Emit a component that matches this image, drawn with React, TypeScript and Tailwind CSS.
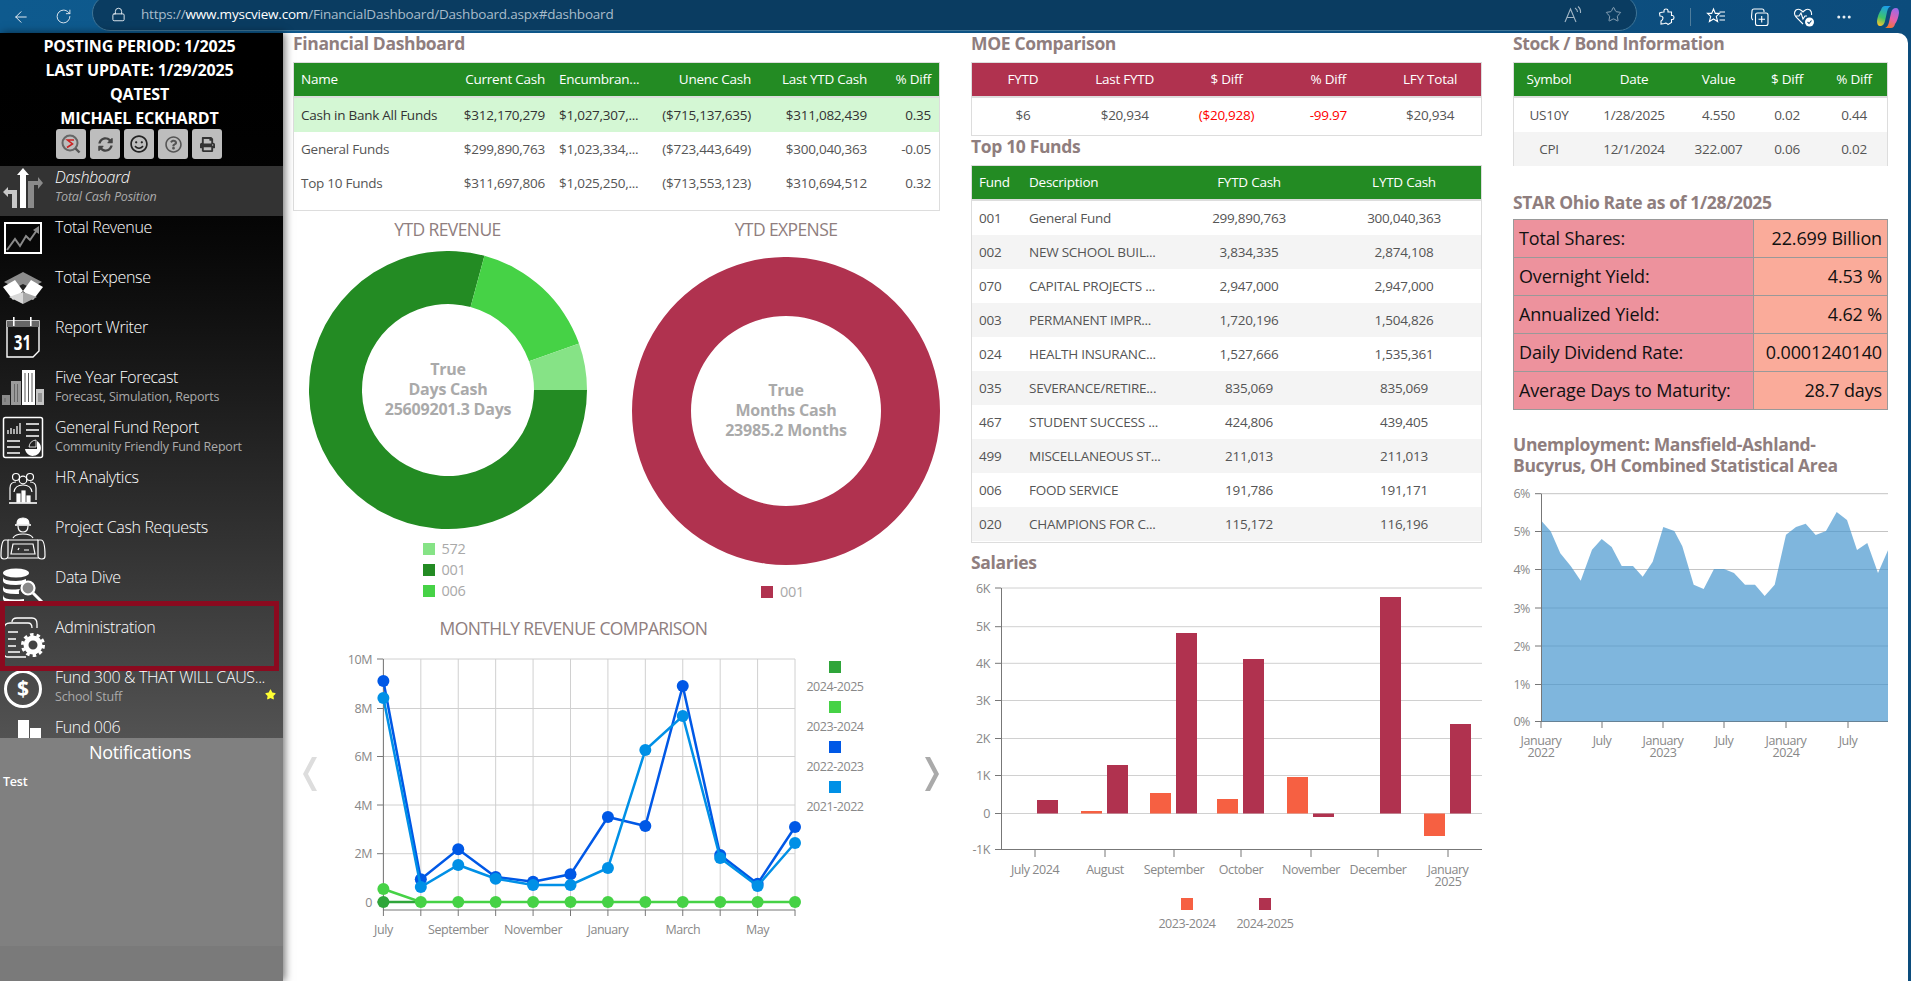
import { ArrowLeft, RotateCw, Lock, Star, Ellipsis } from "lucide-react";
import { FaSyncAlt, FaPrint, FaRegSmile, FaRegQuestionCircle, FaStar } from "react-icons/fa";
import type { ReactNode } from "react";

const CRIMSON = "#b0324f";

function Heading({ children, className = "" }: { children: ReactNode; className?: string }) {
  return <h2 className={`h-[29px] text-[17.5px] font-bold leading-[20px] tracking-[-0.35px] text-[#8f7e7e] ${className}`}>{children}</h2>;
}

function Row({ cols, bg = "", head = false, children }: { cols: string; bg?: string; head?: boolean; children: ReactNode }) {
  return (
    <div
      className={`grid items-center ${head ? "h-[33px] border-b-0 text-white" : "h-[34px] text-[#555]"} ${bg}`}
      style={{ gridTemplateColumns: cols }}
    >
      {children}
    </div>
  );
}

function Cell({ children, className = "" }: { children: ReactNode; className?: string }) {
  return <div className={`truncate px-2 ${className}`}>{children}</div>;
}

function FinancialTable() {
  const cols = "159px 100px 96px 110px 116px 64px";
  const rows = [
    ["Cash in Bank All Funds", "$312,170,279", "$1,027,307,...", "($715,137,635)", "$311,082,439", "0.35"],
    ["General Funds", "$299,890,763", "$1,023,334,...", "($723,443,649)", "$300,040,363", "-0.05"],
    ["Top 10 Funds", "$311,697,806", "$1,025,250,...", "($713,553,123)", "$310,694,512", "0.32"],
  ];
  return (
    <div className="h-[149px] border border-[#ddd] text-[13.5px] tracking-[-0.25px]">
      <div className="bg-[#238b23]">
        <Row cols={cols} head>
          <Cell className="!pl-[7px]">Name</Cell>
          <Cell className="text-right">Current Cash</Cell>
          <div className="truncate pl-[6px]">Encumbran...</div>
          <Cell className="text-right">Unenc Cash</Cell>
          <Cell className="text-right">Last YTD Cash</Cell>
          <Cell className="text-right">% Diff</Cell>
        </Row>
      </div>
      <div className="h-[2px] bg-[#ddd]" />
      {rows.map((r, i) => (
        <Row key={r[0]} cols={cols} bg={i === 0 ? "bg-[#d4f7d4] !text-[#333]" : ""}>
          <Cell className="!pl-[7px]">{r[0]}</Cell>
          <Cell className="text-right">{r[1]}</Cell>
          <div className="truncate pl-[6px]">{r[2]}</div>
          <Cell className="text-right">{r[3]}</Cell>
          <Cell className="text-right">{r[4]}</Cell>
          <Cell className="text-right">{r[5]}</Cell>
        </Row>
      ))}
    </div>
  );
}

function MoeTable() {
  const cols = "repeat(5, 1fr)";
  return (
    <div className="h-[74px] border border-[#ddd] text-center text-[13.5px] tracking-[-0.25px]">
      <Row cols={cols} head bg="bg-[#b0324f]">
        <div>FYTD</div>
        <div>Last FYTD</div>
        <div>$ Diff</div>
        <div>% Diff</div>
        <div>LFY Total</div>
      </Row>
      <div className="h-[2px] bg-[#ddd]" />
      <Row cols={cols}>
        <div>$6</div>
        <div>$20,934</div>
        <div className="text-[#f00]">($20,928)</div>
        <div className="text-[#f00]">-99.97</div>
        <div>$20,934</div>
      </Row>
    </div>
  );
}

function TopFunds() {
  const cols = "49px 150px 156px 154px";
  const rows = [
    ["001", "General Fund", "299,890,763", "300,040,363"],
    ["002", "NEW SCHOOL BUIL...", "3,834,335", "2,874,108"],
    ["070", "CAPITAL PROJECTS ...", "2,947,000", "2,947,000"],
    ["003", "PERMANENT IMPR...", "1,720,196", "1,504,826"],
    ["024", "HEALTH INSURANC...", "1,527,666", "1,535,361"],
    ["035", "SEVERANCE/RETIRE...", "835,069", "835,069"],
    ["467", "STUDENT SUCCESS ...", "424,806", "439,405"],
    ["499", "MISCELLANEOUS ST...", "211,013", "211,013"],
    ["006", "FOOD SERVICE", "191,786", "191,171"],
    ["020", "CHAMPIONS FOR C...", "115,172", "116,196"],
  ];
  return (
    <div className="h-[378px] border border-[#ddd] text-[13.5px] tracking-[-0.25px]">
      <Row cols={cols} head bg="bg-[#238b23]">
        <Cell className="!pl-[7px]">Fund</Cell>
        <Cell>Description</Cell>
        <div className="text-center">FYTD Cash</div>
        <div className="text-center">LYTD Cash</div>
      </Row>
      <div className="h-[2px] bg-[#ddd]" />
      {rows.map((r, i) => (
        <Row key={r[0]} cols={cols} bg={i % 2 === 1 ? "bg-[#f4f4f4]" : ""}>
          <Cell className="!pl-[7px]">{r[0]}</Cell>
          <Cell className="!pr-0">{r[1]}</Cell>
          <div className="text-center">{r[2]}</div>
          <div className="text-center">{r[3]}</div>
        </Row>
      ))}
    </div>
  );
}

function StockTable() {
  const cols = "70px 100px 69px 68px 1fr";
  const rows = [
    ["US10Y", "1/28/2025", "4.550", "0.02", "0.44"],
    ["CPI", "12/1/2024", "322.007", "0.06", "0.02"],
  ];
  return (
    <div className="h-[104px] border border-[#ddd] text-center text-[13.5px] tracking-[-0.25px]">
      <Row cols={cols} head bg="bg-[#238b23]">
        <div>Symbol</div>
        <div>Date</div>
        <div>Value</div>
        <div>$ Diff</div>
        <div>% Diff</div>
      </Row>
      <div className="h-[2px] bg-[#ddd]" />
      {rows.map((r, i) => (
        <Row key={r[0]} cols={cols} bg={i === 1 ? "bg-[#f4f4f4]" : ""}>
          {r.map((c) => (
            <div key={c}>{c}</div>
          ))}
        </Row>
      ))}
    </div>
  );
}

function StarTable() {
  const rows = [
    ["Total Shares:", "22.699 Billion"],
    ["Overnight Yield:", "4.53 %"],
    ["Annualized Yield:", "4.62 %"],
    ["Daily Dividend Rate:", "0.0001240140"],
    ["Average Days to Maturity:", "28.7 days"],
  ];
  return (
    <div className="border-t border-l border-[#999] text-[18px] tracking-[-0.15px] text-[#111]">
      {rows.map((r) => (
        <div key={r[0]} className="grid h-[38px] grid-cols-[240px_1fr] items-center border-b border-[#999]">
          <div className="flex h-full items-center border-r border-[#999] bg-[#ed929d] pl-[5px]">{r[0]}</div>
          <div className="flex h-full items-center justify-end border-r border-[#999] bg-[#faab9a] pr-[5px]">{r[1]}</div>
        </div>
      ))}
    </div>
  );
}

// angles count anticlockwise from 3 o'clock
function arc(cx: number, cy: number, r: number, ri: number, a0: number, a1: number) {
  const p = (rad: number, a: number) => {
    const t = (a * Math.PI) / 180;
    return `${(cx + rad * Math.cos(t)).toFixed(2)} ${(cy - rad * Math.sin(t)).toFixed(2)}`;
  };
  const large = a1 - a0 > 180 ? 1 : 0;
  return `M${p(r, a0)}A${r} ${r} 0 ${large} 0 ${p(r, a1)}L${p(ri, a1)}A${ri} ${ri} 0 ${large} 1 ${p(ri, a0)}Z`;
}

function Legend({ color, label }: { color: string; label: string }) {
  return (
    <div className="flex h-[21px] items-center gap-[7px] text-[14.5px] tracking-[-0.3px] text-[#a9a9a9]">
      <span className="h-[12px] w-[12px]" style={{ background: color }} />
      {label}
    </div>
  );
}

function DonutText({ cx, cy, lines }: { cx: number; cy: number; lines: string[] }) {
  return (
    <g textAnchor="middle" fontSize="16" fontWeight="700" fill="#aaaaaa" letterSpacing="-0.2">
      {lines.map((l, i) => (
        <text key={l} x={cx} y={cy - 15 + i * 20}>
          {l}
        </text>
      ))}
    </g>
  );
}

function ChartTitle({ children }: { children: ReactNode }) {
  return <div className="flex h-[40px] items-center pb-[4px] text-[17.5px] tracking-[-0.6px] text-[#8f7e7e]">{children}</div>;
}

function Donuts() {
  return (
    <div className="flex h-[391px] w-[647px]">
      <div className="flex w-[309px] shrink-0 flex-col items-center">
        <ChartTitle>YTD REVENUE</ChartTitle>
        <svg width="278" height="278" viewBox="0 0 278 278">
          <path d={arc(139, 139, 139, 86, 74.8, 360)} fill="#238b23" />
          <path d={arc(139, 139, 139, 86, 19.5, 74.8)} fill="#46d246" />
          <path d={arc(139, 139, 139, 86, 0, 19.5)} fill="#86e386" />
          <DonutText cx={139} cy={139} lines={["True", "Days Cash", "25609201.3 Days"]} />
        </svg>
        <div className="mt-[9px] w-[50px]">
          <Legend color="#86e386" label="572" />
          <Legend color="#238b23" label="001" />
          <Legend color="#46d246" label="006" />
        </div>
      </div>
      <div className="ml-[17px] flex w-[334px] shrink-0 flex-col items-center">
        <ChartTitle>YTD EXPENSE</ChartTitle>
        <svg width="308" height="308" viewBox="0 0 308 308" className="mt-[6px]">
          <path d={arc(154, 154, 154, 95, 0.01, 360)} fill={CRIMSON} />
          <DonutText cx={154} cy={154} lines={["True", "Months Cash", "23985.2 Months"]} />
        </svg>
        <div className="mt-[16px] w-[50px]">
          <Legend color={CRIMSON} label="001" />
        </div>
      </div>
    </div>
  );
}

const xm = (i: number) => 383.4 + i * 37.42;
const ym = (v: number) => 600 + v / 3;
const darkBlue = [240, 835, 745, 828, 842, 820, 648, 675, 255, 762, 848, 678];
const lightBlue = [291, 858, 792, 833, 852, 852, 801, 447, 345, 771, 855, 726];
const brightGreen = [864, 903, 903, 903, 903, 903, 903, 903, 903, 903, 903, 903];

function Series({ vals, color }: { vals: number[]; color: string }) {
  return (
    <g>
      <polyline points={vals.map((v, i) => `${xm(i)},${ym(v)}`).join(" ")} fill="none" stroke={color} strokeWidth="2.5" />
      {vals.map((v, i) => (
        <circle key={i} cx={xm(i)} cy={ym(v)} r="6" fill={color} />
      ))}
    </g>
  );
}

function MonthlyChart() {
  const ticks = [658, 707.5, 755.5, 804, 852.7, 901];
  const labels = ["10M", "8M", "6M", "4M", "2M", "0"];
  const months: [number, string][] = [[0, "July"], [2, "September"], [4, "November"], [6, "January"], [8, "March"], [10, "May"]];
  const legend: [string, string][] = [["#2fa53a", "2024-2025"], ["#46d246", "2023-2024"], ["#0058e6", "2022-2023"], ["#0090e6", "2021-2022"]];
  return (
    <svg width="540" height="290" viewBox="340 650 540 290" className="shrink-0" letterSpacing="-0.45">
      {ticks.map((y) => (
        <line key={y} x1="383" x2="795" y1={y} y2={y} stroke="#d0d0d0" strokeWidth="1" />
      ))}
      {Array.from({ length: 12 }, (_, i) => (
        <g key={i}>
          <line x1={xm(i)} x2={xm(i)} y1="658" y2="909" stroke="#d0d0d0" />
          <line x1={xm(i)} x2={xm(i)} y1="909" y2="915" stroke="#777" />
        </g>
      ))}
      {ticks.map((y, i) => (
        <g key={y}>
          <line x1="377" x2="383" y1={y} y2={y} stroke="#777" />
          <text x="372" y={y + 4.5} textAnchor="end" fontSize="12.5" fill="#888">{labels[i]}</text>
        </g>
      ))}
      <line x1="383.4" x2="383.4" y1="658" y2="909" stroke="#777" />
      <line x1="383" x2="795" y1="909" y2="909" stroke="#777" />
      {months.map(([i, m]) => (
        <text key={m} x={xm(i)} y="933" textAnchor="middle" fontSize="12.5" fill="#888">{m}</text>
      ))}
      <line x1={xm(0)} x2={xm(1)} y1="901" y2="901" stroke="#2fa53a" strokeWidth="2.5" />
      <Series vals={darkBlue} color="#0058e6" />
      <Series vals={lightBlue} color="#0090e6" />
      <Series vals={brightGreen} color="#46d246" />
      <circle cx={xm(0)} cy="901" r="6" fill="#2fa53a" />
      {legend.map(([c, l], i) => (
        <g key={l}>
          <rect x="829" y={660 + i * 40} width="12" height="12" fill={c} />
          <text x="835" y={689.5 + i * 40} textAnchor="middle" fontSize="12.5" fill="#888">{l}</text>
        </g>
      ))}
    </svg>
  );
}

function Chevron({ color, flip }: { color: string; flip?: boolean }) {
  return (
    <svg width="16" height="34" viewBox="0 0 16 34" className="mt-[106px] shrink-0">
      <polygon points={flip ? "1,0 6,0 15,17 6,34 1,34 10,17" : "15,0 10,0 1,17 10,34 15,34 6,17"} fill={color} />
    </svg>
  );
}

function SalariesChart() {
  const grid: [number, string][] = [[588, "6K"], [626.7, "5K"], [663.3, "4K"], [700.5, "3K"], [738.5, "2K"], [775.5, "1K"], [813.5, "0"], [849.5, "-1K"]];
  const bars: [number, number, number, string][] = [
    [1037, 800, 813.5, CRIMSON],
    [1081, 811, 813.5, "#f66042"],
    [1107, 765, 813.5, CRIMSON],
    [1150, 793, 813.5, "#f66042"],
    [1176, 633, 813.5, CRIMSON],
    [1217, 799, 813.5, "#f66042"],
    [1243, 659, 813.5, CRIMSON],
    [1287, 777, 813.5, "#f66042"],
    [1313, 813.5, 817, CRIMSON],
    [1380, 597, 813.5, CRIMSON],
    [1424, 813.5, 836, "#f66042"],
    [1450, 724, 813.5, CRIMSON],
  ];
  const months: [number, string][] = [[1035, "July 2024"], [1105, "August"], [1174, "September"], [1241, "October"], [1311, "November"], [1378, "December"], [1448, "January"]];
  return (
    <svg width="530" height="360" viewBox="971 582 530 360" className="overflow-visible" letterSpacing="-0.45">
      {grid.map(([y, l]) => (
        <g key={l}>
          <line x1="1001" x2="1482" y1={y} y2={y} stroke={l === "-1K" ? "#777" : "#d0d0d0"} />
          <line x1="995" x2="1001" y1={y} y2={y} stroke="#777" />
          <text x="990" y={y + 4.5} textAnchor="end" fontSize="12.5" fill="#888">{l}</text>
        </g>
      ))}
      <line x1="1001.5" x2="1001.5" y1="588" y2="850" stroke="#777" />
      {bars.map(([x, y0, y1, c]) => (
        <rect key={x} x={x} y={y0} width="21" height={y1 - y0} fill={c} />
      ))}
      {months.map(([x, m]) => (
        <g key={m}>
          <line x1={x} x2={x} y1="850" y2="857" stroke="#777" />
          <text x={x} y="873.5" textAnchor="middle" fontSize="12.5" fill="#888">{m}</text>
        </g>
      ))}
      <text x="1448" y="885.5" textAnchor="middle" fontSize="12.5" fill="#888">2025</text>
      <rect x="1181" y="898" width="12" height="12" fill="#f66042" />
      <rect x="1259" y="898" width="12" height="12" fill={CRIMSON} />
      <text x="1187" y="927.5" textAnchor="middle" fontSize="12.5" fill="#888">2023-2024</text>
      <text x="1265" y="927.5" textAnchor="middle" fontSize="12.5" fill="#888">2024-2025</text>
    </svg>
  );
}

const areaPts = [
  [124, 305], [152, 337], [181, 403], [212, 441], [242, 485], [276, 392], [305, 360], [335, 384], [365, 441], [399, 441], [428, 473], [458, 428],
  [490, 324], [523, 336], [547, 382], [581, 497], [611, 510], [642, 450], [672, 450], [702, 462], [735, 497], [765, 497], [794, 531], [824, 497],
  [858, 347], [888, 324], [917, 314], [947, 348], [978, 336], [1010, 279], [1041, 303], [1071, 393], [1102, 372], [1134, 462], [1164, 394],
];

function UnemploymentChart() {
  const grid: [number, string][] = [[494.7, "6%"], [532.5, "5%"], [570.5, "4%"], [609, "3%"], [647, "2%"], [685.5, "1%"], [722.5, "0%"]];
  const line = areaPts.map(([x, y]) => `${(1500 + x / 3).toFixed(1)},${(420 + y / 3).toFixed(1)}`).join(" ");
  const ticks: [number, string, string?][] = [[1541, "January", "2022"], [1602, "July"], [1663, "January", "2023"], [1724, "July"], [1786, "January", "2024"], [1848, "July"]];
  return (
    <svg width="400" height="300" viewBox="1500 477 400 300" className="ml-[-13px] overflow-visible" letterSpacing="-0.45">
      {grid.map(([y, l]) => (
        <g key={l}>
          <line x1="1541" x2="1888" y1={y} y2={y} stroke={l === "0%" ? "#777" : "#c4c4c4"} />
          <line x1="1535" x2="1541" y1={y} y2={y} stroke="#777" />
          <text x="1530" y={y + 4.5} textAnchor="end" fontSize="12.5" fill="#888">{l}</text>
        </g>
      ))}
      <polygon points={`1541,722.5 ${line} 1888,722.5`} fill="#4897ce" fillOpacity="0.7" />
      <line x1="1541.5" x2="1541.5" y1="494.7" y2="723" stroke="#777" />
      {ticks.map(([x, a, b]) => (
        <g key={x}>
          <line x1={x} x2={x} y1="723" y2="729" stroke="#777" />
          <text x={x} y="746" textAnchor="middle" fontSize="12.5" fill="#888">{a}</text>
          {b && <text x={x} y="758" textAnchor="middle" fontSize="12.5" fill="#888">{b}</text>}
        </g>
      ))}
    </svg>
  );
}

/* sidebar icons, drawn in the 46x50 box of a menu row */
const navIcons: Record<string, ReactNode> = {
  dashboard: (
    <>
      <polygon points="3,26 8,21 8,24 17,24 17,42 12,42 12,28 8,28 8,31" fill="#c8c8c8" />
      <polygon points="28,42 28,15 38,15 38,11 43,17 38,23 38,19 34,19 34,42" fill="#8a8a8a" />
      <polygon points="23,2 29,9 26,9 26,42 20,42 20,9 17,9" fill="#fff" />
    </>
  ),
  revenue: (
    <>
      <rect x="5" y="7" width="36" height="30" fill="none" stroke="#fff" strokeWidth="2" />
      <polyline points="7,34 15,23 20,30 26,20 30,24 37,14" fill="none" stroke="#8a8a8a" strokeWidth="2" />
      <polygon points="39,10 39,18 33,14" fill="#8a8a8a" />
    </>
  ),
  expense: (
    <>
      <polygon points="23,6 42,16 23,26 4,16" fill="#8c8c8c" />
      <polygon points="23,18 31,22 23,26 15,22" fill="#222" />
      <polygon points="3,21 15,14 23,25 13,34" fill="#fff" />
      <polygon points="43,21 31,14 23,25 33,34" fill="#fff" />
      <polygon points="9,31 23,26 23,38" fill="#d8d8d8" />
      <polygon points="37,31 23,26 23,38" fill="#a8a8a8" />
    </>
  ),
  report: (
    <>
      <path d="M7 5H39V35L33 41H7Z" fill="none" stroke="#fff" strokeWidth="1.4" />
      <rect x="7" y="5" width="32" height="6" fill="#666" />
      <rect x="13" y="1" width="1.6" height="9" fill="#fff" />
      <rect x="30" y="1" width="1.6" height="9" fill="#fff" />
      <text transform="translate(22.5 34) scale(0.72 1)" textAnchor="middle" fontSize="21" fontWeight="700" fill="#fff">31</text>
    </>
  ),
  forecast: (
    <>
      <rect x="2" y="29" width="8" height="10" fill="#8a8a8a" />
      <rect x="11" y="15" width="10" height="24" fill="#9a9a9a" />
      <rect x="22" y="4" width="13" height="35" fill="#fff" />
      <rect x="36" y="23" width="8" height="16" fill="#c4c4c4" />
      <path d="M25 7V36M28.5 7V36M32 7V36" stroke="#555" strokeWidth="1" />
      <path d="M14.5 18V36M17.5 18V36M5 32V36M39 27V36M41 27V36" stroke="#666" strokeWidth="1" />
    </>
  ),
  gfr: (
    <>
      <rect x="3.5" y="1.5" width="39" height="40" rx="2" fill="none" stroke="#fff" strokeWidth="1.5" />
      <path d="M8 18V14M11 18V12M14 18V13M17 18V10M20 18V7" stroke="#ccc" strokeWidth="1.6" />
      <path d="M26 8H39M26 14H39M26 20H39M7 25H20M7 31H20M7 37H20" stroke="#fff" strokeWidth="1.6" />
      <path d="M29 31A8 8 0 0 1 36 24V31Z" fill="#222" stroke="#fff" strokeWidth="0.8" />
      <path d="M37 25A8 8 0 1 1 25 33H37Z" fill="#fff" />
    </>
  ),
  hr: (
    <g fill="none" stroke="#fff" strokeWidth="1.2">
      <circle cx="16" cy="11" r="3.5" />
      <circle cx="23" cy="14" r="3.8" />
      <circle cx="30" cy="11" r="3.5" />
      <path d="M10 34V22Q10 16 16 16M36 34V22Q36 16 30 16M14 26Q15 19 23 19Q31 19 32 26" />
      <rect x="17" y="28" width="3" height="8" fill="#fff" />
      <rect x="22" y="25" width="3" height="11" fill="#fff" />
      <rect x="27" y="30" width="3" height="6" fill="#fff" />
      <path d="M9 37H37" strokeWidth="1.6" />
    </g>
  ),
  project: (
    <g fill="none" stroke="#fff" strokeWidth="1.2">
      <path d="M17 8Q17 2 23 2Q29 2 29 8Z" fill="#fff" />
      <path d="M15 9H31" strokeWidth="1.6" />
      <path d="M18 10Q18 16 23 16Q28 16 28 10" />
      <path d="M13 22Q15 18 23 18Q31 18 33 22" />
      <path d="M5 24Q1 24 1 40Q1 43 4 43Q8 43 8 40V24ZM41 24Q45 24 45 40Q45 43 42 43Q38 43 38 40V24Z" />
      <path d="M8 24H38M8 42H38M13 28H33L35 38H11Z" />
      <path d="M18 34L19 32M24 34H29" />
    </g>
  ),
  data: (
    <>
      <ellipse cx="16" cy="7" rx="13" ry="4.5" fill="#fff" />
      <path d="M3 11V15Q3 19 16 19Q22 19 26 17V13Q22 15 16 15Q3 15 3 11ZM3 20V24Q3 28 16 28L19 28Q18 25 20 23Q3 25 3 20ZM3 29V33Q3 37 16 37L24 38V33Q3 35 3 29Z" fill="#fff" />
      <circle cx="28" cy="22" r="6.5" fill="#888" stroke="#fff" strokeWidth="2.2" />
      <path d="M33 27L43 37" stroke="#fff" strokeWidth="3" />
    </>
  ),
  admin: (
    <>
      <path d="M12 6Q12 2 17 2H32Q37 2 37 8V12" fill="none" stroke="#fff" strokeWidth="1.3" />
      <path d="M4 13Q4 7 10 7H28Q32 7 32 12M26 41H8Q4 41 4 37V13" fill="none" stroke="#fff" strokeWidth="1.3" />
      <path d="M8 16H18M8 23H16M8 30H16M8 36H20" stroke="#fff" strokeWidth="1.3" />
      <circle cx="33" cy="29" r="7" fill="none" stroke="#fff" strokeWidth="5" />
      <circle cx="33" cy="29" r="10.5" fill="none" stroke="#fff" strokeWidth="3" strokeDasharray="3.5 3.1" />
    </>
  ),
  fund: (
    <>
      <circle cx="23" cy="23" r="17.5" fill="none" stroke="#fff" strokeWidth="3" />
      <text x="23" y="30" textAnchor="middle" fontSize="21" fontWeight="700" fill="#fff">$</text>
    </>
  ),
  fund6: (
    <>
      <rect x="18" y="4" width="11" height="18" fill="#fff" />
      <rect x="30" y="12" width="11" height="10" fill="#fff" />
    </>
  ),
};

const navItems = [
  { icon: "dashboard", title: "Dashboard", sub: "Total Cash Position", active: true },
  { icon: "revenue", title: "Total Revenue" },
  { icon: "expense", title: "Total Expense" },
  { icon: "report", title: "Report Writer" },
  { icon: "forecast", title: "Five Year Forecast", sub: "Forecast, Simulation, Reports" },
  { icon: "gfr", title: "General Fund Report", sub: "Community Friendly Fund Report" },
  { icon: "hr", title: "HR Analytics" },
  { icon: "project", title: "Project Cash Requests" },
  { icon: "data", title: "Data Dive" },
  { icon: "admin", title: "Administration" },
  { icon: "fund", title: "Fund 300 & THAT WILL CAUS...", sub: "School Stuff", star: true },
  { icon: "fund6", title: "Fund 006" },
];

function NavRow({ item }: { item: (typeof navItems)[number] }) {
  return (
    <div className={`relative flex h-[50px] shrink-0 ${item.active ? "bg-[#333]" : ""}`}>
      <svg width="46" height="50" viewBox="0 0 46 50" className="shrink-0">
        {navIcons[item.icon]}
      </svg>
      <div className={`ml-[9px] w-[224px] min-w-0 ${item.active ? "italic" : ""}`}>
        <div className="whitespace-nowrap text-[16px] font-light leading-[22px] tracking-[-0.35px] text-white">{item.title}</div>
        {item.sub && <div className="truncate text-[12.5px] leading-[18px] tracking-[-0.2px] text-[#aaa]">{item.sub}</div>}
      </div>
      {item.star && <FaStar className="absolute left-[265px] top-[23px] text-[11px] text-[#ffff33]" />}
    </div>
  );
}

function Sidebar() {
  const tools = [
    <svg key="s" width="22" height="22" viewBox="0 0 22 22" fill="none">
      <circle cx="10" cy="10" r="7.5" stroke="#666" strokeWidth="2" />
      <path d="M14 7H7.5L12.5 11L7 14.5" stroke="#c22" strokeWidth="1.6" />
      <path d="M15.5 15.5L19.5 19.5" stroke="#555" strokeWidth="2.4" />
    </svg>,
    <FaSyncAlt key="r" className="text-[15px] text-[#444]" />,
    <FaRegSmile key="f" className="text-[18px] text-[#222]" />,
    <FaRegQuestionCircle key="q" className="text-[17px] text-[#555]" />,
    <FaPrint key="p" className="text-[15px] text-[#333]" />,
  ];
  return (
    <aside className="relative z-10 flex w-[283px] shrink-0 flex-col bg-gradient-to-b from-[#000] to-[#7e7e7e] shadow-[2px_0_8px_rgba(0,0,0,0.55)]">
      <header className="h-[133px] pr-[4px] pt-[1px] text-center text-[16px] font-bold leading-[24px] tracking-[-0.15px] text-white">
        <div>POSTING PERIOD: 1/2025</div>
        <div>LAST UPDATE: 1/29/2025</div>
        <div>QATEST</div>
        <div>MICHAEL ECKHARDT</div>
        <div className="mt-[-1px] flex gap-[4px] pl-[56px]">
          {tools.map((t, i) => (
            <button key={i} className="flex h-[30px] w-[30px] items-center justify-center rounded-[3px] bg-[#bdbdbd]">{t}</button>
          ))}
        </div>
      </header>
      <nav className="flex h-[572px] flex-col overflow-hidden">
        {navItems.map((n) => (
          <NavRow key={n.icon} item={n} />
        ))}
      </nav>
      <div className="absolute left-0 top-[568px] h-[70px] w-[279px] border-[5px] border-[#8b0a1f]" />
      <section className="flex flex-1 flex-col bg-[#808080] text-white">
        <div className="h-[30px] pr-[3px] pt-[1px] text-center text-[18px] leading-[26px] tracking-[-0.3px]">Notifications</div>
        <div className="pl-[3px] pt-[5px] text-[12.5px] font-semibold tracking-[-0.2px]">Test</div>
        <div className="mt-auto h-[35px] bg-[#7a7a7a]" />
      </section>
    </aside>
  );
}

function BrowserBar() {
  return (
    <div className="flex h-[33px] shrink-0 items-center overflow-hidden bg-gradient-to-r from-[#0e5a8e] to-[#0c4c7c] text-[#e8eef3]">
      <ArrowLeft className="ml-[12px] h-[18px] w-[18px]" strokeWidth={1.3} />
      <RotateCw className="ml-[25px] h-[17px] w-[17px]" strokeWidth={1.3} />
      <div className="ml-[20px] mt-[-7px] flex h-[36px] w-[1545px] items-center rounded-full border border-[#3f7597] bg-[#0a3c61] pt-[3px]">
        <Lock className="ml-[18px] h-[15px] w-[15px]" strokeWidth={1.5} />
        <div className="ml-[15px] text-[13.5px] tracking-[-0.2px] text-[#a9bccb]">
          https://<span className="text-white">www.myscview.com</span>/FinancialDashboard/Dashboard.aspx#dashboard
        </div>
        <div className="ml-auto mr-[14px] flex items-center gap-[22px]">
          <svg width="20" height="18" viewBox="0 0 20 18" fill="none" stroke="#9fb4c4" strokeWidth="1.1">
            <path d="M2 16L7.5 3L13 16M4 11.5H11M12 2Q14.5 3.5 14.5 6M15 0.5Q18 3 17.5 7" />
          </svg>
          <Star className="h-[17px] w-[17px] text-[#9fb4c4]" strokeWidth={1.2} />
        </div>
      </div>
      <div className="ml-[20px] flex items-center">
        <svg width="18" height="18" viewBox="0 0 18 18" fill="none" stroke="#fff" strokeWidth="1.1">
          <path d="M7 2.5Q7 1 9 1Q11 1 11 2.5V4H14.5V7.5H15.5Q17 7.5 17 9.5Q17 11.5 15.5 11.5H14.5V14.5L11 16.5Q9.5 14.5 7.5 15.5L4 16V13Q6 12 6 10Q6 8 3 8L2.5 5Q5 4 7 4Z" />
        </svg>
        <div className="ml-[15px] h-[18px] w-px bg-[#4f7d9c]" />
        <svg width="20" height="20" viewBox="0 0 20 20" fill="none" stroke="#fff" strokeWidth="1.1" className="ml-[15px]">
          <path d="M7.5 2L9.3 6.4H13.5L10.3 9.4L11.6 14.5L7.5 12L3.4 14.5L4.7 9.4L1.5 6.4H5.7Z" />
          <path d="M13.5 5H19M13.5 9H19M13.5 13H19" />
        </svg>
        <svg width="20" height="20" viewBox="0 0 20 20" fill="none" stroke="#fff" strokeWidth="1.1" className="ml-[24px]">
          <rect x="5.5" y="6" width="12.5" height="12.5" rx="2" />
          <path d="M3 13Q1.5 12 1.5 10L2 4Q2 2 4 2H12Q14 2 14 4V5M11.7 9V15.5M8.5 12.2H15" />
        </svg>
        <svg width="22" height="22" viewBox="0 0 22 22" fill="none" stroke="#fff" strokeWidth="1.1" className="ml-[23px]">
          <path d="M10 18L3 11Q0 7 3 4Q6 2 9 5L10 6L11 5Q14 2 17 4Q19 6 18.5 9M2 10H6L8 7L10 13L12 10H14" />
          <circle cx="16.5" cy="16" r="4.5" fill="#fff" stroke="none" />
          <path d="M14.5 16L16 17.5L18.5 14.5" stroke="#0c4c7c" />
        </svg>
        <Ellipsis className="ml-[20px] h-[18px] w-[18px]" />
        <svg width="24" height="24" viewBox="0 0 24 24" className="ml-[23px]">
          <defs>
            <linearGradient id="cpA" x1="0.6" y1="0" x2="0.3" y2="1">
              <stop offset="0" stopColor="#1b9de8" />
              <stop offset="0.6" stopColor="#3ec46a" />
              <stop offset="1" stopColor="#f2c530" />
            </linearGradient>
            <linearGradient id="cpB" x1="0.7" y1="0" x2="0.3" y2="1">
              <stop offset="0" stopColor="#9a6ae8" />
              <stop offset="0.55" stopColor="#e85fa8" />
              <stop offset="1" stopColor="#f2772f" />
            </linearGradient>
          </defs>
          <path d="M9 1H15Q12 2 11 7L9 16Q8 21 4 21Q1 21 1 16Q2 9 5 5Q6 1 9 1Z" fill="url(#cpA)" />
          <path d="M15 23H9Q12 22 13 17L15 8Q16 3 20 3Q23 3 23 8Q22 15 19 19Q18 23 15 23Z" fill="url(#cpB)" />
        </svg>
      </div>
    </div>
  );
}

export default function App() {
  return (
    <div className="flex h-[981px] w-[1911px] flex-col overflow-hidden bg-[#0c4c7c] font-['Open_Sans',sans-serif]">
      <BrowserBar />
      <div className="flex min-h-0 flex-1">
        <Sidebar />
        <main className="flex w-[1625px] shrink-0 rounded-tr-[10px] bg-white pl-[10px]">
          <div className="w-[647px] shrink-0">
            <Heading>Financial Dashboard</Heading>
            <FinancialTable />
            <Donuts />
            <div className="flex h-[49px] items-center justify-center pt-[3px] pr-[86px] text-[17.5px] tracking-[-0.6px] text-[#8f7e7e]">
              MONTHLY REVENUE COMPARISON
            </div>
            <div className="flex">
              <div className="ml-[9px]"><Chevron color="#dddddd" /></div>
              <div className="ml-[22px]"><MonthlyChart /></div>
              <div className="ml-[44px]"><Chevron color="#aaaaaa" flip /></div>
            </div>
          </div>
          <div className="ml-[31px] w-[511px] shrink-0">
            <Heading>MOE Comparison</Heading>
            <MoeTable />
            <Heading>Top 10 Funds</Heading>
            <TopFunds />
            <Heading className="mt-[9px] !h-[30px]">Salaries</Heading>
            <SalariesChart />
          </div>
          <div className="ml-[31px] w-[375px] shrink-0">
            <Heading>Stock / Bond Information</Heading>
            <StockTable />
            <Heading className="mt-[26px] !h-[27px]">STAR Ohio Rate as of 1/28/2025</Heading>
            <StarTable />
            <h2 className="mt-[24px] text-[17.5px] font-bold leading-[21px] tracking-[-0.35px] text-[#8f7e7e]">
              Unemployment: Mansfield-Ashland-
              <br />
              Bucyrus, OH Combined Statistical Area
            </h2>
            <UnemploymentChart />
          </div>
        </main>
      </div>
    </div>
  );
}
